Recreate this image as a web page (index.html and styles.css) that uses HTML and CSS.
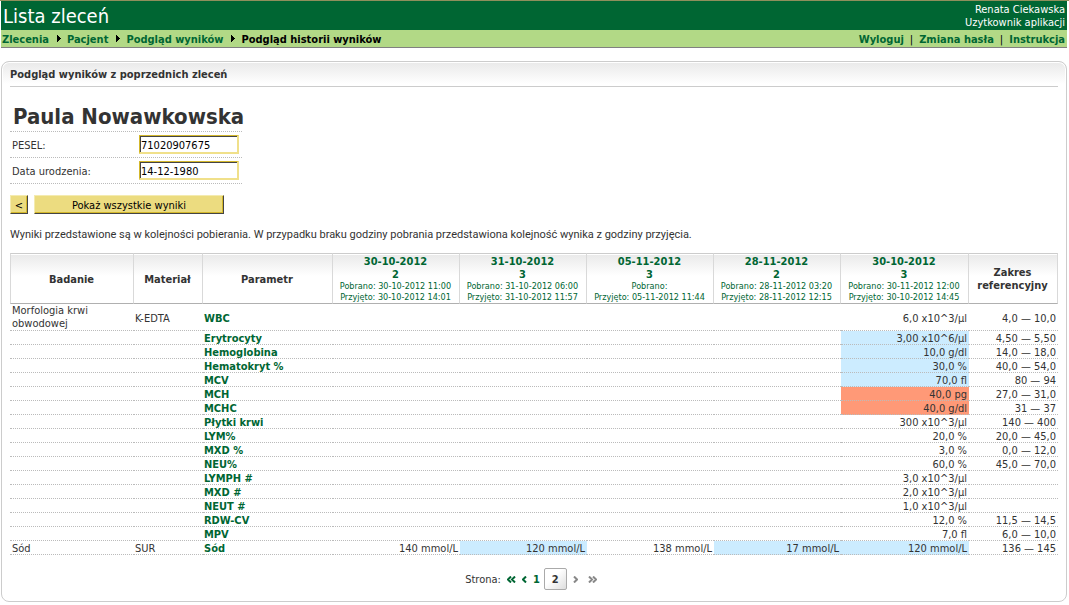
FILE: index.html
```html
<!DOCTYPE html>
<html lang="pl">
<head>
<meta charset="utf-8">
<title>Lista zleceń</title>
<link rel="stylesheet" href="styles.css">
</head>
<body>
<header class="topbar">
  <h1 class="app-title">Lista zleceń</h1>
  <div class="user"><div>Renata Ciekawska</div><div>Uzytkownik aplikacji</div></div>
</header>
<nav class="navbar">
  <div class="crumbs">
    <a href="#">Zlecenia</a><svg class="arrow" viewBox="0 0 4 7"><path d="M0 0h1v1h1v1h1v1h1v1h-1v1h-1v1h-1v1h-1z"/></svg>
    <a href="#">Pacjent</a><svg class="arrow" viewBox="0 0 4 7"><path d="M0 0h1v1h1v1h1v1h1v1h-1v1h-1v1h-1v1h-1z"/></svg>
    <a href="#">Podgląd wyników</a><svg class="arrow" viewBox="0 0 4 7"><path d="M0 0h1v1h1v1h1v1h1v1h-1v1h-1v1h-1v1h-1z"/></svg>
    <span>Podgląd historii wyników</span>
  </div>
  <div class="links"><a href="#">Wyloguj</a><span class="sep">|</span><a href="#">Zmiana hasła</a><span class="sep">|</span><a href="#">Instrukcja</a></div>
</nav>
<main class="panel">
  <h2 class="panel-title">Podgląd wyników z poprzednich zleceń</h2>
  <section class="patient">
    <h3 class="patient-name">Paula Nowawkowska</h3>
    <div class="field"><label for="pesel">PESEL:</label><input id="pesel" type="text" value="71020907675"></div>
    <div class="field"><label for="birth">Data urodzenia:</label><input id="birth" type="text" value="14-12-1980"></div>
  </section>
  <div class="actions"><button type="button" class="btn">&lt;</button><button type="button" class="btn btn-wide">Pokaż wszystkie wyniki</button></div>
  <p class="note">Wyniki przedstawione są w kolejności pobierania. W przypadku braku godziny pobrania przedstawiona kolejność wynika z godziny przyjęcia.</p>
  <table class="results">
    <colgroup><col class="c-test"><col class="c-material"><col class="c-param"><col class="c-date"><col class="c-date"><col class="c-date"><col class="c-date"><col class="c-last"><col></colgroup>
    <thead><tr>
      <th>Badanie</th><th>Materiał</th><th>Parametr</th>
      <th class="date">30-10-2012<br>2<small>Pobrano: 30-10-2012 11:00<br>Przyjęto: 30-10-2012 14:01</small></th>
      <th class="date">31-10-2012<br>3<small>Pobrano: 31-10-2012 06:00<br>Przyjęto: 31-10-2012 11:57</small></th>
      <th class="date">05-11-2012<br>3<small>Pobrano:<br>Przyjęto: 05-11-2012 11:44</small></th>
      <th class="date">28-11-2012<br>2<small>Pobrano: 28-11-2012 03:20<br>Przyjęto: 28-11-2012 12:15</small></th>
      <th class="date">30-10-2012<br>3<small>Pobrano: 30-11-2012 12:00<br>Przyjęto: 30-10-2012 14:45</small></th>
      <th>Zakres referencyjny</th>
    </tr></thead>
    <tbody>
      <tr><td class="lines">Morfologia krwi<br>obwodowej</td><td>K-EDTA</td><td class="param">WBC</td><td></td><td></td><td></td><td></td><td class="num">6,0 x10^3/µl</td><td class="num">4,0 — 10,0</td></tr>
      <tr><td></td><td></td><td class="param">Erytrocyty</td><td></td><td></td><td></td><td></td><td class="num low">3,00 x10^6/µl</td><td class="num">4,50 — 5,50</td></tr>
      <tr><td></td><td></td><td class="param">Hemoglobina</td><td></td><td></td><td></td><td></td><td class="num low">10,0 g/dl</td><td class="num">14,0 — 18,0</td></tr>
      <tr><td></td><td></td><td class="param">Hematokryt %</td><td></td><td></td><td></td><td></td><td class="num low">30,0 %</td><td class="num">40,0 — 54,0</td></tr>
      <tr><td></td><td></td><td class="param">MCV</td><td></td><td></td><td></td><td></td><td class="num low">70,0 fl</td><td class="num">80 — 94</td></tr>
      <tr><td></td><td></td><td class="param">MCH</td><td></td><td></td><td></td><td></td><td class="num high">40,0 pg</td><td class="num">27,0 — 31,0</td></tr>
      <tr><td></td><td></td><td class="param">MCHC</td><td></td><td></td><td></td><td></td><td class="num high">40,0 g/dl</td><td class="num">31 — 37</td></tr>
      <tr><td></td><td></td><td class="param">Płytki krwi</td><td></td><td></td><td></td><td></td><td class="num">300 x10^3/µl</td><td class="num">140 — 400</td></tr>
      <tr><td></td><td></td><td class="param">LYM%</td><td></td><td></td><td></td><td></td><td class="num">20,0 %</td><td class="num">20,0 — 45,0</td></tr>
      <tr><td></td><td></td><td class="param">MXD %</td><td></td><td></td><td></td><td></td><td class="num">3,0 %</td><td class="num">0,0 — 12,0</td></tr>
      <tr><td></td><td></td><td class="param">NEU%</td><td></td><td></td><td></td><td></td><td class="num">60,0 %</td><td class="num">45,0 — 70,0</td></tr>
      <tr><td></td><td></td><td class="param">LYMPH #</td><td></td><td></td><td></td><td></td><td class="num">3,0 x10^3/µl</td><td></td></tr>
      <tr><td></td><td></td><td class="param">MXD #</td><td></td><td></td><td></td><td></td><td class="num">2,0 x10^3/µl</td><td></td></tr>
      <tr><td></td><td></td><td class="param">NEUT #</td><td></td><td></td><td></td><td></td><td class="num">1,0 x10^3/µl</td><td></td></tr>
      <tr><td></td><td></td><td class="param">RDW-CV</td><td></td><td></td><td></td><td></td><td class="num">12,0 %</td><td class="num">11,5 — 14,5</td></tr>
      <tr><td></td><td></td><td class="param">MPV</td><td></td><td></td><td></td><td></td><td class="num">7,0 fl</td><td class="num">6,0 — 10,0</td></tr>
      <tr><td>Sód</td><td>SUR</td><td class="param">Sód</td><td class="num">140 mmol/L</td><td class="num low">120 mmol/L</td><td class="num">138 mmol/L</td><td class="num low">17 mmol/L</td><td class="num low">120 mmol/L</td><td class="num">136 — 145</td></tr>
    </tbody>
  </table>
  <nav class="pager" aria-label="Strona">
    <span>Strona:</span>
    <a href="#" aria-label="Pierwsza"><svg class="dbl" viewBox="0 0 9 7"><path d="M4 0.5L1 3.5L4 6.5M8 0.5L5 3.5L8 6.5"/></svg></a>
    <a href="#" aria-label="Poprzednia"><svg class="sgl" viewBox="0 0 5 7"><path d="M4 0.5L1 3.5L4 6.5"/></svg></a>
    <a href="#">1</a>
    <span class="current">2</span>
    <svg class="sgl off" viewBox="0 0 5 7"><path d="M1 0.5L4 3.5L1 6.5"/></svg>
    <svg class="dbl off last" viewBox="0 0 9 7"><path d="M1 0.5L4 3.5L1 6.5M5 0.5L8 3.5L5 6.5"/></svg>
  </nav>
</main>
</body>
</html>
```
FILE: styles.css
```css
* { box-sizing: border-box; }
body {
  margin: 0;
  padding: 0 2px 0 1px;
  border-top: 1px solid #8f8f5c;
  background: #fff;
  color: #333;
  font: 11px/13px "DejaVu Sans Condensed", "DejaVu Sans", sans-serif;
}
a { color: #006633; text-decoration: none; }
.topbar {
  display: flex;
  justify-content: space-between;
  height: 29px;
  padding: 2px 2px 0;
  background: #006633;
  color: #fff;
}
.app-title { margin: 0; font: 20px/26px "DejaVu Sans Condensed", "DejaVu Sans", sans-serif; }
.user { text-align: right; }
.navbar {
  display: flex;
  justify-content: space-between;
  height: 18px;
  padding: 3px 2px 0 1px;
  border-bottom: 1px solid #808080;
  background: #b2d986;
  color: #000;
  font-weight: bold;
}
.crumbs { display: flex; }
.arrow { width: 4px; height: 7px; margin: 2px 6px 0 8px; }
.sep { margin: 0 6px; font-weight: normal; }
.panel {
  margin-top: 13px;
  padding: 0 8px;
  border: 1px solid #ccc;
  border-radius: 8px;
  background: linear-gradient(#e9e9e9, #fff 22px);
  box-shadow: inset 0 0 0 1px #fff;
}
.panel-title {
  margin: 0;
  padding: 6px 0 5px;
  border-bottom: 1px solid #ccc;
  font-size: 11px;
  line-height: 13px;
}
.patient { width: 232px; padding-top: 16px; }
.patient-name {
  margin: 0;
  padding: 1px 3px;
  border-bottom: 1px dotted #bbb;
  font: bold 22px/26px "DejaVu Sans Condensed", "DejaVu Sans", sans-serif;
  white-space: nowrap;
}
.field {
  display: flex;
  align-items: center;
  height: 26px;
  padding-left: 2px;
  border-bottom: 1px dotted #bbb;
}
.field label { width: 127px; padding-top: 1px; }
.field input {
  width: 100px;
  height: 19px;
  padding: 2px 1px 0;
  border: 1px solid #d4b82c;
  border-right: 2px solid #f0e08a;
  border-bottom: 2px solid #f0e08a;
  box-shadow: inset 1px 1px 0 #444;
  background: #fff;
  color: #000;
  font: inherit;
}
.actions { display: flex; gap: 6px; padding-top: 11px; }
.btn {
  width: 18px;
  height: 19px;
  padding: 1px 0 0;
  border: 1px solid #f4ebb0;
  border-right-color: #444;
  border-bottom-color: #444;
  box-shadow: inset -1px -1px 0 #d4b82c;
  background: #ecdc80;
  color: #000;
  font: inherit;
}
.btn-wide { width: 190px; }
.note { margin: 0; padding: 14px 0 12px; font-family: Roboto, "Liberation Sans", sans-serif; white-space: nowrap; }
.results { width: 100%; table-layout: fixed; border-collapse: separate; border-spacing: 0; }
.c-test { width: 124px; }
.c-material { width: 69px; }
.c-param { width: 130px; }
.c-date { width: 127px; }
.c-last { width: 128px; }
.results th {
  height: 51px;
  padding: 1px 1px 0 0;
  border-top: 1px solid #ccc;
  border-right: 1px solid #d9d9d9;
  border-bottom: 1px solid #b0b0b0;
  background: linear-gradient(#e9e9e9, #fff 22px);
  box-shadow: inset 0 1px 0 #fff;
}
.results th:first-child { border-left: 1px solid #d9d9d9; }
.results .date { color: #006633; }
.results small { display: block; font-size: 9px; line-height: 11px; font-weight: normal; white-space: nowrap; }
.results td {
  height: 14px;
  padding: 2px 2px 0 1px;
  border-bottom: 1px dotted #bbb;
  line-height: 11px;
  white-space: nowrap;
}
.results td:first-child { padding-left: 2px; }
.results .lines { padding-top: 0; line-height: 13px; }
.results .param { color: #006633; font-weight: bold; }
.results .num { text-align: right; }
.results .low { background: #ccecff; }
.results .high { background: #ff9977; }
.pager {
  display: flex;
  justify-content: center;
  align-items: center;
  gap: 6px;
  padding: 13px 6px 11px 0;
}
.pager a { font-weight: bold; }
.pager svg { display: block; height: 7px; fill: none; stroke: #006633; stroke-width: 2; }
.pager .off { stroke: #888; }
.pager .dbl { width: 9px; }
.pager .sgl { width: 5px; }
.pager .last { margin-left: 4px; }
.current {
  width: 23px;
  height: 22px;
  margin-left: -2px;
  border: 1px solid #aaa;
  border-radius: 2px;
  background: linear-gradient(135deg, #fff 40%, #ddd);
  font-weight: bold;
  line-height: 22px;
  text-align: center;
}
```
